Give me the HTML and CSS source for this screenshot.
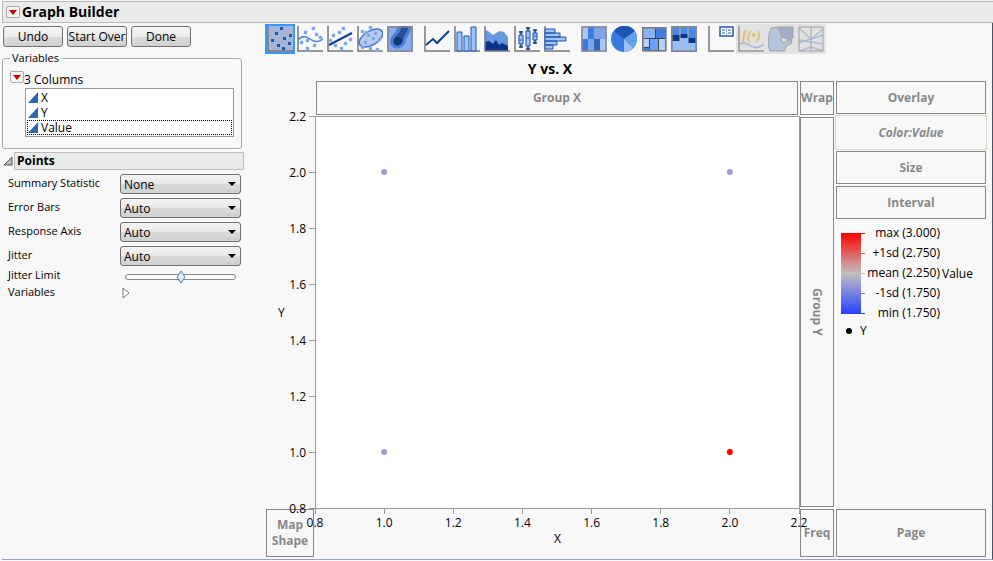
FILE: index.html
```
<!DOCTYPE html>
<html lang="en">
<head>
    <meta charset="UTF-8">
    <meta name="viewport" content="width=device-width, initial-scale=1.0">
    <title>Graph Builder</title>
    <link rel="stylesheet" href="styles.css">
</head>
<body>

<header class="title-bar">
    <button class="red-menu" aria-label="Graph Builder menu"></button>
    <h1>Graph Builder</h1>
</header>

<main class="builder">
    <div class="control-panel">
        <div class="actions">
            <button>Undo</button>
            <button>Start Over</button>
            <button>Done</button>
        </div>

        <fieldset class="variables">
            <legend>Variables</legend>
            <div class="columns-head">
                <button class="red-menu" aria-label="Columns menu"></button>
                <span>3 Columns</span>
            </div>
            <ul class="column-list">
                <li><svg width="10" height="11" viewBox="0 0 10 11"><path d="M0 11L10 0V11Z"/></svg>X</li>
                <li><svg width="10" height="11" viewBox="0 0 10 11"><path d="M0 11L10 0V11Z"/></svg>Y</li>
                <li class="focused"><svg width="10" height="11" viewBox="0 0 10 11"><path d="M0 11L10 0V11Z"/></svg>Value</li>
            </ul>
        </fieldset>

        <div class="outline">
            <svg width="10" height="10" viewBox="0 0 10 10"><path d="M1 9L9 1V9Z" fill="#bbb" stroke="#555"/></svg>
            <h2>Points</h2>
        </div>

        <div class="options">
            <label for="statistic">Summary Statistic</label>
            <span class="dropdown"><select id="statistic"><option>None</option><option>Mean</option><option>Median</option></select></span>
            <label for="errorbars">Error Bars</label>
            <span class="dropdown"><select id="errorbars"><option>Auto</option><option>None</option></select></span>
            <label for="axis">Response Axis</label>
            <span class="dropdown"><select id="axis"><option>Auto</option><option>X</option><option>Y</option></select></span>
            <label for="jitter">Jitter</label>
            <span class="dropdown"><select id="jitter"><option>Auto</option><option>None</option></select></span>
        </div>
        <div class="options compact">
            <label for="limit">Jitter Limit</label>
            <input type="range" id="limit" min="0" max="100" value="50">
            <span>Variables</span>
            <button class="disclose" aria-label="Show variables"><svg width="8" height="12" viewBox="0 0 8 12"><path d="M1 1V11L7 6Z" fill="#fff" stroke="#777"/></svg></button>
        </div>
    </div>

    <div class="graph-panel">
        <nav class="toolbar">
            <div class="tool-group">
                <button class="selected" aria-label="Points"><svg viewBox="0 0 26 26">
                    <path class="axes" d="M1 0V25H26"/>
                    <path class="dots" d="M13 1h3v3h-3zM8 6h3v3H8zM22 8h3v3h-3zM16 11h3v3h-3zM4 13h3v3H4zM21 16h3v3h-3zM10 18h3v3h-3zM15 21h3v3h-3z"/>
                </svg></button>
                <button aria-label="Smoother"><svg viewBox="0 0 26 26">
                    <path class="axes" d="M1 0V25H26"/>
                    <path class="pale-dots" d="M15 1h3v3h-3zM7 5h3v3H7zM18 7h3v3h-3zM22 10h3v3h-3zM3 15h3v3H3zM9 13h3v3H9zM16 18h3v3h-3zM9 21h3v3H9z"/>
                    <path d="M1 14C5 9 9 10 13 13S21 17 26 13" fill="none" stroke="#5c80c8" stroke-width="1.5"/>
                </svg></button>
                <button aria-label="Line of fit"><svg viewBox="0 0 26 26">
                    <path class="axes" d="M1 0V25H26"/>
                    <path class="pale-dots" d="M15 1h3v3h-3zM11 5h3v3h-3zM5 8h3v3H5zM2 13h3v3H2zM22 12h3v3h-3zM17 16h3v3h-3zM7 18h3v3H7zM13 21h3v3h-3z"/>
                    <path d="M2 19L25 7" stroke="#0c3c9c" stroke-width="2"/>
                </svg></button>
                <button aria-label="Ellipse"><svg viewBox="0 0 26 26">
                    <path class="axes" d="M1 0V25H26"/>
                    <ellipse cx="14" cy="12" rx="13" ry="7" transform="rotate(-30 14 12)" fill="#b5caf0" stroke="#3c78dc" stroke-width="1.5"/>
                    <path class="pale-dots" d="M12 0h3v3h-3zM4 4h3v3H4zM8 5h3v3H8zM17 6h3v3h-3zM10 8h3v3h-3zM15 11h3v3h-3zM21 12h3v3h-3zM7 15h3v3H7zM12 21h3v3h-3zM19 22h3v3h-3zM4 20h3v3H4z"/>
                </svg></button>
                <button aria-label="Contour"><svg viewBox="0 0 26 26">
                    <path fill="#86aef0" d="M0 0h26v26H0z"/>
                    <path d="M10 0C11 6 3 9 3 15C3 21 8 24 13 22C19 20 18 14 21 10C23 7 24 4 24 0Z" fill="#4d80d2"/>
                    <path d="M14 0C15 8 6 10 6 15C6 20 11 21 14 18C17 15 16 10 19 7C21 5 21 2 21 0Z" fill="#224f9e"/>
                    <circle cx="11" cy="15" r="4" fill="#123772"/>
                    <path class="frame" d="M1 1h24v24H1z"/>
                </svg></button>
            </div>
            <div class="tool-group">
                <button aria-label="Line"><svg viewBox="0 0 26 26">
                    <path class="axes" d="M1 0V25H26"/>
                    <path d="M2 19L9 13L13 17L25 5" fill="none" stroke="#0c3c9c" stroke-width="2"/>
                </svg></button>
                <button aria-label="Bar"><svg viewBox="0 0 26 26">
                    <path class="axes" d="M1 0V25H26"/>
                    <path class="bars" d="M3 6h5v19H3zM10 10h5v15h-5zM17 1h5v24h-5z"/>
                </svg></button>
                <button aria-label="Area"><svg viewBox="0 0 26 26">
                    <path d="M1 4L4 5L9 9L12 7L16 5L20 6L24 11V25H1Z" fill="#6698dc"/>
                    <path d="M1 16L5 15L9 18L12 14L15 19L18 17L24 20V25H1Z" fill="#0a348c"/>
                    <path class="axes" d="M1 0V25H26"/>
                </svg></button>
                <button aria-label="Box plot"><svg viewBox="0 0 26 26">
                    <path class="axes" d="M1 0V25H26"/>
                    <path d="M7 5V21M14 1V24M21 4V18" stroke="#dcdcd4" stroke-width="5"/>
                    <path d="M7 5V21M14 1V24M21 4V18M5 6h4M5 21h4M12 2h4M12 23h4M19 4h4M19 17h4" stroke="#16428c" stroke-width="1.5"/>
                    <path class="bars" d="M5 9h4v9H5zM12 5h4v15h-4zM19 7h4v7h-4z"/>
                    <path d="M5 14h4M12 12h4M19 10h4" stroke="#2060c0"/>
                </svg></button>
                <button aria-label="Histogram"><svg viewBox="0 0 26 26">
                    <path class="axes" d="M1 0V25H26"/>
                    <path class="bars" d="M1 3h10v4H1zM1 7h15v4H1zM1 11h21v4H1zM1 15h12v4H1zM1 19h8v4H1z"/>
                </svg></button>
            </div>
            <div class="tool-group">
                <button aria-label="Heatmap"><svg viewBox="0 0 26 26">
                    <path fill="#a8c8fc" d="M0 0h26v26H0z"/>
                    <path fill="#3c7ce0" d="M7 1h6v12H7zM1 13h6v12H1zM19 1h6v12h-6z"/>
                    <path fill="#7ea4ec" d="M13 1h6v12h-6zM7 13h6v12H7z"/>
                    <path fill="#2f64bc" d="M13 13h6v12h-6z"/>
                    <path fill="#7ea4ec" d="M19 1h6v12h-6z"/>
                    <path class="frame" d="M1 1h24v24H1z"/>
                </svg></button>
                <button aria-label="Pie"><svg viewBox="0 0 26 26">
                    <circle cx="13" cy="13" r="13" fill="#3a7adc"/>
                    <path d="M13 13L3 5A13 13 0 0 1 24 5Z" fill="#1c54b4"/>
                    <path d="M13 13L24 5A13 13 0 0 1 22 22Z" fill="#62a0e8"/>
                    <path d="M13 13L22 22A13 13 0 0 1 13 26Z" fill="#9cc0fc"/>
                </svg></button>
                <button aria-label="Treemap"><svg viewBox="0 0 26 26">
                    <path fill="#444" d="M1 1h24v24H1z"/>
                    <path fill="#8cb0f0" d="M2 2h12v10H2z"/>
                    <path fill="#3c7ce0" d="M15 2h9v10h-9zM2 22h6v2H2z"/>
                    <path fill="#b4d0fc" d="M2 13h6v8H2zM18 13h6v11h-6z"/>
                    <path fill="#6aa0f8" d="M9 13h8v11H9z"/>
                    <path class="frame" d="M2 2h23v23H2z"/>
                </svg></button>
                <button aria-label="Mosaic"><svg viewBox="0 0 26 26">
                    <path fill="#4c88e4" d="M0 0h26v26H0z"/>
                    <path fill="#98bcfc" d="M1 15h8v10H1zM9 12h8v13H9zM17 17h8v8h-8z"/>
                    <path fill="#0c388c" d="M1 9h8v6H1zM9 8h8v4H9zM17 12h8v5h-8z"/>
                    <path d="M9 0V26M17 0V26" stroke="#bbb"/>
                    <path class="frame" d="M1 1h24v24H1z"/>
                </svg></button>
            </div>
            <div class="tool-group">
                <button aria-label="Caption box"><svg viewBox="0 0 26 26">
                    <path class="axes" d="M1 0V25H26"/>
                    <path d="M12 1h13v9H12z" fill="#fff" stroke="#2458b8" stroke-width="1.5"/>
                    <path d="M14 4h3M20 4h3M14 7h3M20 7h3M18 3h1M18 5h1M18 8h1" stroke="#2458b8" stroke-width="1"/>
                </svg></button>
                <button disabled aria-label="Formula"><svg viewBox="0 0 26 26">
                    <path class="axes" d="M1 0V25H26"/>
                    <text x="4" y="14">f(•)</text>
                    <path d="M1 19C5 15 9 17 13 20S21 22 26 18" fill="none" stroke="#8ca4d0" stroke-width="1.5"/>
                </svg></button>
                <button disabled aria-label="Map shapes"><svg viewBox="0 0 26 26">
                    <path d="M3 2L10 1L15 9L13 13L15 17L23 13L24 17L18 20L17 25H2L0 19L1 9Z" fill="#a4b8dc" stroke="#888"/>
                    <path d="M10 1H25L25 12L22 14L14 11Z" fill="#8898bc" stroke="#888"/>
                </svg></button>
                <button disabled aria-label="Parallel"><svg viewBox="0 0 26 26">
                    <path d="M1 2L13 13L25 3M1 17L25 9M1 25L13 21L25 25M1 14L25 18" fill="none" stroke="#98acd4" stroke-width="1.5"/>
                    <path d="M1 1h24v24H1zM13 1v24" fill="none" stroke="#888"/>
                </svg></button>
            </div>
        </nav>

        <div class="graph">
            <h2 class="graph-title">Y vs. X</h2>
            <div class="zone group-x">Group X</div>
            <div class="zone wrap">Wrap</div>
            <div class="zone map-shape">Map Shape</div>
            <div class="y-title">Y</div>
            <svg class="plot" id="plot" role="img" aria-label="Scatter plot of Y against X">
                <rect width="100%" height="100%"/>
            </svg>
            <div class="zone group-y">Group Y</div>
            <div class="x-title">X</div>
            <div class="zone freq">Freq</div>
            <aside class="roles">
                <div class="zone">Overlay</div>
                <div class="zone assigned">Color:Value</div>
                <div class="zone">Size</div>
                <div class="zone">Interval</div>
                <div class="color-legend">
                    <div class="ramp"><i></i><i></i><i></i><i></i><i></i></div>
                    <div class="ramp-labels">
                        <span>max (3.000)</span>
                        <span>+1sd (2.750)</span>
                        <span>mean (2.250)</span>
                        <span>-1sd (1.750)</span>
                        <span>min (1.750)</span>
                    </div>
                    <span>Value</span>
                </div>
                <div class="marker-legend"><i></i>Y</div>
            </aside>
            <div class="zone page">Page</div>
        </div>
    </div>
</main>

<script>
    const points = [
        { x: 1, y: 2, color: '#9f9fd2' },
        { x: 2, y: 2, color: '#9f9fd2' },
        { x: 1, y: 1, color: '#9f9fd2' },
        { x: 2, y: 1, color: '#ff0000' }
    ];
    const min = 0.8;
    const max = 2.2;
    const plot = document.getElementById('plot');

    function percent(value) {
        return (value - min) / (max - min) * 100;
    }

    let marks = '';
    for (let i = 0; i <= 7; i++) {
        const label = (min + i * 0.2).toFixed(1);
        const pos = percent(min + i * 0.2);
        // tick and label of each axis
        marks += `<svg class="tick" x="${pos}%" y="100%"><path d="M0 0V6"/><text y="19" text-anchor="middle">${label}</text></svg>`;
        marks += `<svg class="tick" x="0" y="${100 - pos}%"><path d="M0 0H-6"/><text x="-9" y="5" text-anchor="end">${label}</text></svg>`;
    }
    points.forEach(p => {
        marks += `<circle cx="${percent(p.x)}%" cy="${100 - percent(p.y)}%" r="3" fill="${p.color}"/>`;
    });
    plot.innerHTML += marks;
</script>

</body>
</html>
```
FILE: styles.css
```
* {
    box-sizing: border-box;
}
body {
    display: flex;
    flex-direction: column;
    min-height: 100vh;
    margin: 0;
    padding: 1px 0 1px 2px;
    background: #f8f8f8;
    color: #000;
    font-family: "Open Sans", "Noto Sans", sans-serif;
    font-size: 12px;
    line-height: 15px;
}
button, select {
    font: inherit;
    color: inherit;
}
h1, h2 {
    margin: 0;
}

/* Title bar */
.title-bar {
    display: flex;
    align-items: center;
    gap: 2px;
    height: 22px;
    padding-left: 3px;
    background: #ebebeb;
    border: 1px solid #bbb;
    border-right: none;
}
.title-bar h1 {
    font-size: 14px;
    line-height: 20px;
}
.red-menu {
    display: flex;
    align-items: center;
    justify-content: center;
    width: 14px;
    height: 12px;
    padding: 0;
    background: #f4f4f4;
    border: 1px solid #aaa;
    border-radius: 2px;
}
.red-menu::after {
    content: "";
    border: 4px solid transparent;
    border-top: 5px solid #c80000;
    border-bottom: none;
}

.builder {
    display: flex;
    flex: 1;
    border-right: 1px solid #44546a;
    border-bottom: 1px solid #98a4c4;
}

/* Left side */
.control-panel {
    width: 242px;
    margin-right: 22px;
}
.actions {
    display: flex;
    gap: 4px;
    padding: 3px 1px 4px;
}
.actions button {
    width: 60px;
    height: 21px;
    padding: 0;
    line-height: 18px;
    white-space: nowrap;
    background: linear-gradient(#f4f4f4, #ececec 50%, #dcdcdc 50%, #d0d0d0);
    border: 1px solid #707070;
    border-radius: 3px;
}
.variables {
    height: 98px;
    width: 240px;
    margin: 0;
    padding: 6px 7px 0;
    border: 1px solid #aaa;
    border-radius: 3px;
}
.variables legend {
    padding: 0 4px 0 2px;
    line-height: 14px;
    font-size: 11px;
}
.columns-head {
    display: flex;
    line-height: 17px;
}
.column-list {
    margin: 0 0 0 15px;
    padding: 1px;
    list-style: none;
    background: #fff;
    border: 1px solid #999;
}
.column-list li {
    display: flex;
    align-items: center;
    gap: 3px;
    height: 15px;
    line-height: 13px;
    border: 1px solid transparent;
}
.column-list .focused {
    border: 1px dotted #000;
}
.column-list path {
    fill: #2f66b4;
}
.outline {
    display: flex;
    align-items: center;
    gap: 1px;
    margin-top: 3px;
    padding-left: 1px;
}
.outline h2 {
    flex: 1;
    padding-left: 2px;
    font-size: 12px;
    line-height: 16px;
    background: #ebebeb;
    border: 1px solid #bbb;
}
.options {
    display: grid;
    grid-template-columns: 112px 121px;
    grid-auto-rows: 20px;
    row-gap: 4px;
    padding: 4px 0 0 6px;
    font-size: 11px;
    line-height: 17px;
}
.compact {
    grid-auto-rows: 17px;
    row-gap: 0;
    padding-top: 2px;
    line-height: 14px;
}
.dropdown {
    position: relative;
    font-size: 12px;
}
.dropdown::after {
    content: "";
    position: absolute;
    top: 8px;
    right: 5px;
    border: 4px solid transparent;
    border-top-color: #000;
    border-bottom: none;
    pointer-events: none;
}
.dropdown select {
    display: block;
    width: 121px;
    height: 20px;
    padding: 0 3px;
    appearance: none;
    background: linear-gradient(#f4f4f4, #e8e8e8 50%, #dadada 50%, #d0d0d0);
    border: 1px solid #707070;
    border-radius: 3px;
}
.compact input {
    width: 111px;
    height: 17px;
    margin: 0 0 0 5px;
    appearance: none;
    background: none;
}
.compact input::-webkit-slider-runnable-track {
    height: 6px;
    background: #fff;
    border: 1px solid #888;
    border-radius: 3px;
}
.compact input::-webkit-slider-thumb {
    appearance: none;
    width: 10px;
    height: 14px;
    margin-top: -5px;
    background: url("data:image/svg+xml,%3Csvg xmlns='http://www.w3.org/2000/svg' viewBox='0 0 10 14'%3E%3Cpath d='M5 1L9 7L5 13L1 7Z' fill='%23dcebfc' stroke='%235080a8'/%3E%3C/svg%3E");
}
.disclose {
    display: flex;
    justify-self: start;
    margin-left: 2px;
    padding: 2px 0;
    background: none;
    border: none;
}

/* Right side */
.graph-panel {
    display: flex;
    flex: 1;
    flex-direction: column;
    min-width: 0;
    padding-right: 8px;
}
.toolbar {
    display: flex;
    gap: 11px;
    padding: 3px 0 3px 1px;
}
.tool-group {
    display: flex;
    gap: 4px;
}
.toolbar button {
    width: 26px;
    height: 26px;
    padding: 0;
    background: none;
    border: none;
}
.toolbar svg {
    display: block;
    width: 26px;
    height: 26px;
}
.toolbar .selected {
    background: #a6b4d6;
    box-shadow: 0 0 0 2px #3399ff;
}
.toolbar button:disabled {
    background: #e2e2e2;
    box-shadow: 0 0 0 2px #e2e2e2;
}
.toolbar button:disabled svg {
    opacity: 0.7;
}
.axes {
    fill: none;
    stroke: #777;
    stroke-width: 1.5;
}
.frame {
    fill: none;
    stroke: #888;
    stroke-width: 1.5;
}
.dots {
    fill: #2058b0;
}
.pale-dots {
    fill: #6c9ce0;
    stroke: #a8c4ec;
    stroke-width: 0.5;
}
.bars {
    fill: #a0c4fc;
    stroke: #1c54b4;
}
.toolbar text {
    font: italic bold 14px "Liberation Serif", serif;
    fill: #d8b440;
}

.graph {
    display: grid;
    flex: 1;
    grid-template-columns: 49px 1fr 34px 150px;
    grid-template-rows: 26px 35px 1fr 48px;
    padding-bottom: 2px;
}
.graph-title {
    grid-area: 1 / 2;
    padding-right: 15px;
    font-size: 14px;
    line-height: 27px;
    text-align: center;
}
.zone {
    display: flex;
    align-items: center;
    justify-content: center;
    color: #888;
    font-weight: bold;
    line-height: 16px;
    text-align: center;
    border: 1px solid #888;
}
.group-x {
    grid-area: 2 / 2;
    margin: 0 2px 1px 1px;
}
.wrap {
    grid-area: 2 / 3;
    margin-bottom: 1px;
}
.y-title {
    grid-area: 3 / 1;
    align-self: center;
    padding-left: 12px;
}
.plot {
    grid-area: 3 / 2;
    width: calc(100% - 1px);
    height: calc(100% - 1px);
    overflow: visible;
}
.plot rect {
    fill: #fff;
    stroke: #999;
    shape-rendering: crispEdges;
}
.tick {
    overflow: visible;
}
.tick path {
    stroke: #999;
    shape-rendering: crispEdges;
}
.group-y {
    grid-area: 3 / 3;
    margin: 1px 0 2px;
    writing-mode: vertical-rl;
}
.map-shape {
    grid-area: 4 / 1;
    margin-right: 1px;
}
.x-title {
    grid-area: 4 / 2;
    align-self: end;
    padding-bottom: 11px;
    text-align: center;
}
.freq {
    grid-area: 4 / 3;
}
.page {
    grid-area: 4 / 4;
}
.roles {
    grid-area: 2 / 4 / 4 / 5;
}
.page, .roles {
    margin-left: 2px;
    margin-right: -2px;
}
.roles .zone {
    height: 33px;
    margin-bottom: 2px;
}
.roles .assigned {
    height: 35px;
    margin: -1px -1px 1px;
    font-style: italic;
    border-color: #d8d8c4;
}
.color-legend {
    display: flex;
    align-items: center;
    gap: 2px;
    padding: 2px 0 0 5px;
}
.ramp {
    display: flex;
    flex-direction: column;
    justify-content: space-between;
    width: 24px;
    height: 81px;
    padding-left: 20px;
    background: linear-gradient(#f00, #c0c0c0 50%, #2840ff) no-repeat 0 0 / 20px 100%;
}
.ramp i {
    height: 1px;
    background: #c0c0c0;
}
.ramp i:nth-child(1) {
    background: #f00;
}
.ramp i:nth-child(2) {
    background: #e06060;
}
.ramp i:nth-child(4) {
    background: #7480e0;
}
.ramp i:nth-child(5) {
    background: #2840ff;
}
.ramp-labels {
    width: 73px;
    line-height: 20px;
    text-align: right;
}
.ramp-labels span {
    display: block;
    white-space: nowrap;
}
.marker-legend {
    display: flex;
    align-items: center;
    gap: 8px;
    padding-left: 10px;
}
.marker-legend i {
    width: 6px;
    height: 6px;
    background: #000;
    border-radius: 50%;
}
```
